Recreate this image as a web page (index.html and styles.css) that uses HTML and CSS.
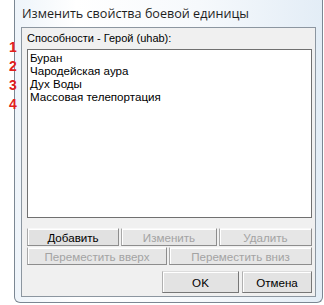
FILE: index.html
```html
<!DOCTYPE html>
<html>
<head>
  <meta charset="UTF-8">
  <title>Изменить свойства боевой единицы</title>
  <link rel="stylesheet" href="styles.css">
</head>
<body>
  <div class="window">
    <div class="title">Изменить свойства боевой единицы</div>
    <div class="client">
      <div class="label">Способности - Герой (uhab):</div>
      <div class="listbox">
        <div class="item">Буран</div>
        <div class="item">Чародейская аура</div>
        <div class="item">Дух Воды</div>
        <div class="item">Массовая телепортация</div>
      </div>
      <div class="row three">
        <button class="btn">Добавить</button>
        <button class="btn" disabled>Изменить</button>
        <button class="btn" disabled>Удалить</button>
      </div>
      <div class="row two">
        <button class="btn" disabled>Переместить вверх</button>
        <button class="btn" disabled>Переместить вниз</button>
      </div>
      <div class="actions">
        <button class="btn big ok">OK</button>
        <button class="btn big cancel">Отмена</button>
      </div>
    </div>
  </div>
  <!-- red markers drawn over the screenshot -->
  <div class="marks">
    <span class="mark">1</span>
    <span class="mark">2</span>
    <span class="mark">3</span>
    <span class="mark">4</span>
  </div>
</body>
</html>
```

FILE: styles.css
```css
body {
  margin: 0;
  background: #ffffff;
  font-family: "Liberation Sans", Arial, sans-serif;
  font-size: 11px;
  color: #000;
  position: relative;
  width: 324px;
  height: 305px;
  overflow: hidden;
}

.window {
  margin-left: 14px;
  width: 307px;
  height: 302px;
  border: 1px solid #7b8793;
  border-top: none;
  border-radius: 0 0 6px 6px;
  background: linear-gradient(90deg, #eef4fa 0%, #ffffff 20%, #f6f9fc 60%, #e3edf6 100%);
}

.title {
  height: 27px;
  line-height: 28px;
  padding-left: 7px;
  font-family: "Open Sans", "Noto Sans", sans-serif;
  font-size: 12.6px;
  color: #1e1e1e;
}

.client {
  margin: 0 6px;
  height: 268px;
  border: 1px solid #8c96a0;
  background: #f0f0f0;
  padding: 0 3px 0 5px;
  display: flex;
  flex-direction: column;
}

.label {
  height: 21px;
  line-height: 21px;
}

.listbox {
  height: 165px;
  border: 1px solid #707070;
  background: #ffffff;
  padding: 1px 2px;
  line-height: 13px;
  font-size: 11.6px;
}

.row {
  display: grid;
  gap: 2px;
  height: 18px;
}

.three {
  margin-top: 10px;
  grid-template-columns: 92px 96px 93px;
}

.two {
  margin-top: 1px;
  grid-template-columns: 140px 143px;
}

.btn {
  font-family: "Liberation Sans", Arial, sans-serif;
  font-size: 11.6px;
  color: #000;
  background: #e1e1e1;
  border: 1px solid #8d8d8d;
  border-top-color: #f8f8f8;
  border-left-color: #a8a8a8;
  box-shadow: inset 1px 1px 0 #ffffff;
  padding: 0;
  margin: 0;
}

.btn:disabled {
  color: #a3a3a3;
  background: #e6e6e6;
}

.actions {
  display: flex;
  justify-content: flex-end;
  gap: 3px;
  margin-top: 6px;
}

.big {
  height: 22px;
  background: #e3e3e3;
  border: 1px solid #777;
  border-top-color: #dcdcdc;
  border-left-color: #b0b0b0;
}

.ok {
  width: 77px;
}

.cancel {
  width: 70px;
}

.marks {
  position: absolute;
  left: 9px;
  top: 40px;
  display: flex;
  flex-direction: column;
  gap: 4px;
}

.mark {
  display: block;
  height: 15px;
  line-height: 15px;
  font-family: "Liberation Sans", Arial, sans-serif;
  font-weight: bold;
  font-size: 14px;
  color: #e0201c;
}
```
